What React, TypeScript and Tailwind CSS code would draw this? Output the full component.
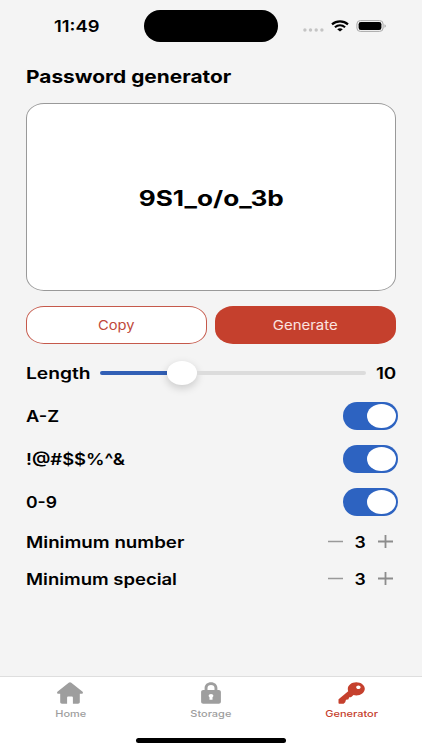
import React, { useState } from 'react';
import clsx from 'clsx';

const StatusBar: React.FC = () => (
  <header className="grid h-[52px] grid-cols-[144px_134px_144px] items-center">
    <div className="pl-[10px] text-center text-[16px] font-semibold leading-none">
      <span className="inline-block scale-x-[1.15]">11:49</span>
    </div>
    <div className="h-[32px] rounded-full bg-black" />
    <div className="flex items-center pl-[25px]">
      <svg width="21" height="4" viewBox="0 0 21 4" fill="#c4c4c4" className="mt-2">
        <circle cx="1.9" cy="2" r="1.7" />
        <circle cx="7.5" cy="2" r="1.7" />
        <circle cx="13.2" cy="2" r="1.7" />
        <circle cx="18.9" cy="2" r="1.7" />
      </svg>
      <svg width="18" height="12" viewBox="0 0 18 12" fill="none" stroke="#000" className="ml-[7px]">
        <path d="M1 4.300C5.600.3 12.400.3 17 4.300" strokeWidth="2.200" />
        <path d="M3.900 7.200c3-2.500 7.200-2.500 10.200 0" strokeWidth="2.100" />
        <path d="M6.200 9.300c1.700-1.300 3.900-1.300 5.600 0L9 11.600z" fill="#000" stroke="none" />
      </svg>
      <svg width="31" height="12" viewBox="0 0 31 12" fill="none" className="ml-[7px]">
        <rect x=".9" y=".6" width="26.2" height="10.8" rx="3.4" stroke="#a8a8a8" />
        <rect x="2.6" y="2" width="22.8" height="8" rx="2.2" fill="#000" />
        <path d="M28.500 4.200c1.800.6 1.800 3 0 3.600z" fill="#a8a8a8" />
      </svg>
    </div>
  </header>
);

interface RowProps {
  label: string;
  labelClass: string;
}

const ToggleRow: React.FC<RowProps> = ({ label, labelClass }) => {
  const [on, setOn] = useState(true);

  return (
    <div className="flex h-[43px] items-center justify-between">
      <span className={clsx('origin-left text-[16px] font-semibold', labelClass)}>{label}</span>
      <button
        role="switch"
        aria-checked={on}
        aria-label={label}
        onClick={() => setOn(!on)}
        className={clsx('-mr-[2px] flex h-[28px] w-[55px] items-center rounded-full px-[2px]', on ? 'justify-end bg-[#2d63c1]' : 'bg-gray-300')}
      >
        <span className="h-[24px] w-[29px] rounded-[50%] bg-white" />
      </button>
    </div>
  );
};

const StepperRow: React.FC<RowProps> = ({ label, labelClass }) => {
  const [value, setValue] = useState(3);

  return (
    <div className="flex h-[37px] items-center justify-between">
      <span className={clsx('origin-left text-[16px] font-semibold', labelClass)}>{label}</span>
      <div className="mr-[3px] flex items-center">
        <button aria-label="Decrease" onClick={() => setValue(value - 1)}>
          <svg width="15" height="13" viewBox="0 0 15 13" stroke="#999" strokeWidth="1.5">
            <path d="M0 6.500h15" />
          </svg>
        </button>
        <span className="w-[35px] text-center text-[16px] font-semibold">
          <span className="inline-block scale-x-110">{value}</span>
        </span>
        <button aria-label="Increase" onClick={() => setValue(value + 1)}>
          <svg width="15" height="13" viewBox="0 0 15 13" stroke="#8c8c8c" strokeWidth="1.8">
            <path d="M0 6.500h15M7.500 0v13" />
          </svg>
        </button>
      </div>
    </div>
  );
};

interface TabProps {
  label: string;
  active?: boolean;
  children: React.ReactNode;
}

const Tab: React.FC<TabProps> = ({ label, active, children }) => (
  <button className={clsx('flex flex-col items-center pt-[5px]', active ? 'text-[#c5402d]' : 'text-[#9e9e9e]')}>
    {children}
    <span className="mt-[4px] scale-x-[1.22] text-[9px] font-medium leading-[12px]">{label}</span>
  </button>
);

const App: React.FC = () => {
  const [password] = useState('9S1_o/o_3b');

  return (
    <div className="flex h-[750px] w-[422px] flex-col overflow-hidden bg-[#f4f4f4] font-['Inter','Liberation_Sans',sans-serif] text-black">
      <StatusBar />

      <main className="flex-1 px-[26px] pt-[12px]">
        <h1 className="flex h-[24px] items-center text-[18px] font-bold">
          <span className="origin-left scale-x-[1.16]">Password generator</span>
        </h1>

        <div className="mt-[15px] flex h-[188px] items-center justify-center rounded-[18px/15px] border border-[#999] bg-white pt-[3px] text-[21px] font-bold">
          <span className="scale-x-[1.245]">{password}</span>
        </div>

        <div className="mt-[15px] flex gap-[8px] text-[13px]">
          <button className="h-[38px] w-[181px] rounded-[18px/15px] border border-[#c5594b] bg-white pt-[2px] text-[#c0483a]">
            <span className="inline-block scale-x-[1.13]">Copy</span>
          </button>
          <button className="h-[38px] w-[181px] rounded-[18px/15px] bg-[#c5402d] pt-[2px] text-[#fbe4e0]">
            <span className="inline-block scale-x-[1.15]">Generate</span>
          </button>
        </div>

        <div className="flex h-[50px] items-center pt-[8px] text-[16px] font-semibold">
          <span className="w-[74px]">
            <span className="inline-block origin-left scale-x-[1.2]">Length</span>
          </span>
          <div className="flex w-[266px] items-center">
            <div className="h-[4px] w-[67px] rounded-l-full bg-[#315fb5]" />
            <div className="h-[24px] w-[30px] rounded-[50%] bg-white shadow-[0_3px_8px_rgba(0,0,0,0.18)]" />
            <div className="h-[4px] flex-1 rounded-r-full bg-[#dcdcdc]" />
          </div>
          <span className="flex-1 text-right">
            <span className="inline-block origin-right scale-x-[1.18]">10</span>
          </span>
        </div>

        <ToggleRow label="A-Z" labelClass="scale-x-[1.14]" />
        <ToggleRow label="!@#$$%^&" labelClass="scale-x-[1.15]" />
        <ToggleRow label="0-9" labelClass="scale-x-[1.1]" />
        <StepperRow label="Minimum number" labelClass="scale-x-[1.17]" />
        <StepperRow label="Minimum special" labelClass="scale-x-[1.155]" />
      </main>

      <nav className="flex h-[74px] flex-col border-t border-[#dedede] bg-white">
        <div className="grid flex-1 grid-cols-3">
          <Tab label="Home">
            <svg width="26" height="22" viewBox="0 0 26 22" fill="currentColor">
              <path d="M11.700.8c.8-.7 1.800-.7 2.600 0l11 8.800c1.200 1 .6 2.200-.8 2.200h-1.700V20c0 1-.7 1.700-1.800 1.700h-5.100v-6.200c0-.6-.3-.9-1-.9h-3.800c-.7 0-1 .3-1 .9v6.200H5c-1.100 0-1.800-.7-1.800-1.700v-8.200H1.500c-1.400 0-2-1.200-.8-2.200z" />
            </svg>
          </Tab>
          <Tab label="Storage">
            <svg width="20" height="22" viewBox="0 0 20 22" fill="currentColor">
              <path fillRule="evenodd" d="M3.600 8V6C3.600 2.500 6.400.2 10 .2S16.400 2.500 16.400 6v2h1.300c1.300 0 2.200.8 2.200 2v9.700c0 1.200-.9 2-2.200 2H2.300c-1.300 0-2.200-.8-2.200-2V10c0-1.200.9-2 2.200-2zM6.500 8h7V6c0-2-1.300-3.100-3.500-3.100S6.500 4 6.500 6zM10 11.900c-1.400 0-2.400.8-2.400 1.900 0 .6.300 1.100.9 1.400v2.600h3v-2.600c.6-.3.9-.8.9-1.400 0-1.100-1-1.900-2.400-1.900z" />
            </svg>
          </Tab>
          <Tab label="Generator" active>
            <svg width="27" height="22" viewBox="0 0 27 22" fill="currentColor">
              <path fillRule="evenodd" d="M18.300.2c4.700 0 8.500 2.900 8.500 6.600s-3.800 6.700-8.500 6.700c-1 0-1.900-.1-2.800-.4l-1.900 1.700c-.3.300-.6.400-1 .4h-1.400l-.7 1.700c-.1.300-.4.500-.8.600l-1.700.3-.8 2.400-1.300 1.200c-.2.200-.5.300-.8.300H1.500c-.6 0-1-.4-1-1v-2.900c0-.4.1-.6.400-.8l9.300-7.700c-.3-.8-.4-1.600-.4-2.500C9.800 3.100 13.600.2 18.300.2zm2.100 3.200c-1.200 0-2.200.8-2.200 1.800S19.200 7 20.400 7s2.200-.8 2.200-1.800-1-1.800-2.200-1.800z" />
            </svg>
          </Tab>
        </div>
        <div className="mx-auto mb-[7px] h-[5px] w-[150px] rounded-full bg-black" />
      </nav>
    </div>
  );
};

export default App;
